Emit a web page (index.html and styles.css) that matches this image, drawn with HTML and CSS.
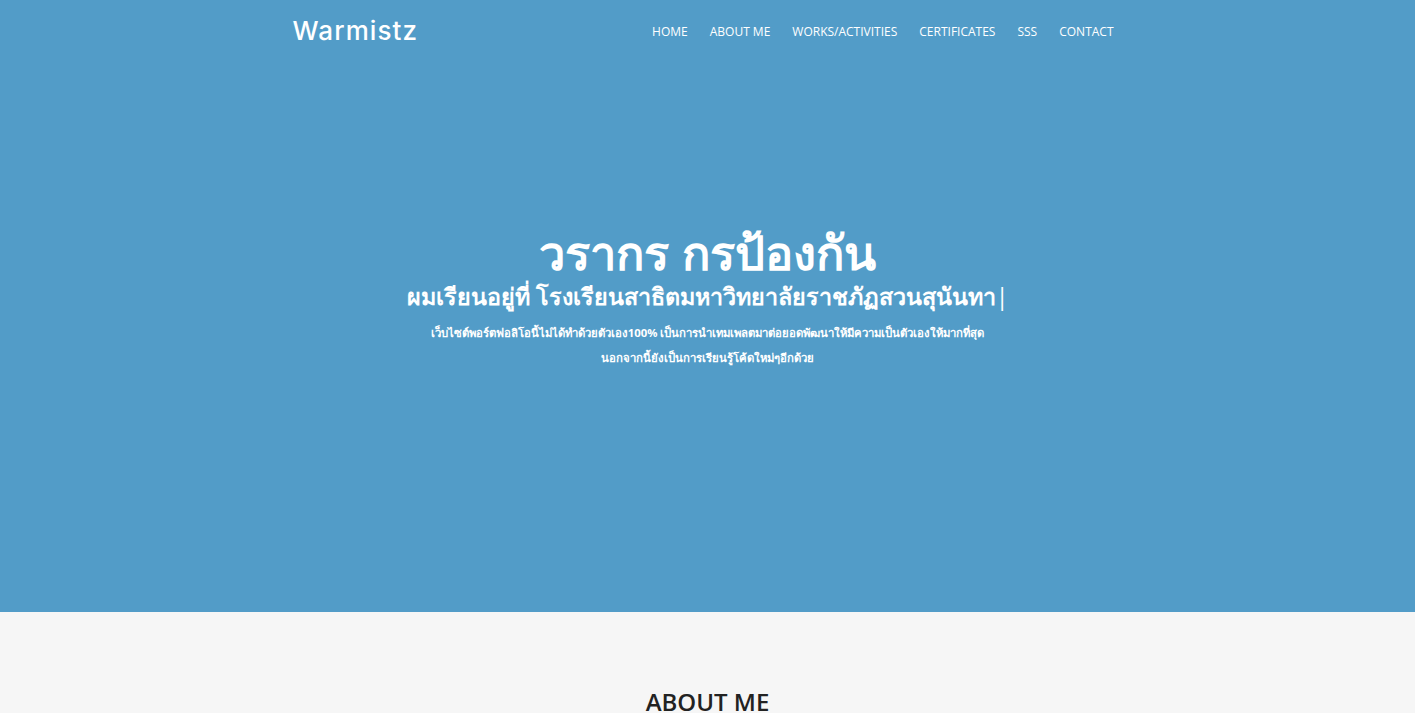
FILE: index.html
```html
<!DOCTYPE html>
<html lang="th">
<head>
<meta charset="utf-8">
<title>Warmistz</title>
<link rel="stylesheet" href="styles.css">
</head>
<body>
<header class="hero">
  <nav class="navbar">
    <div class="logo">Warmistz</div>
    <ul class="menu">
      <li><a href="#">HOME</a></li>
      <li><a href="#">ABOUT ME</a></li>
      <li><a href="#">WORKS/ACTIVITIES</a></li>
      <li><a href="#">CERTIFICATES</a></li>
      <li><a href="#">SSS</a></li>
      <li><a href="#">CONTACT</a></li>
    </ul>
  </nav>
  <div class="hero-content">
    <h1 class="hero-title">วรากร กรป้องกัน</h1>
    <h2 class="hero-sub">ผมเรียนอยู่ที่ <span class="typed">โรงเรียนสาธิตมหาวิทยาลัยราชภัฏสวนสุนันทา</span><span class="cursor">|</span></h2>
    <p class="hero-text">เว็บไซต์พอร์ตฟอลิโอนี้ไม่ได้ทำด้วยตัวเอง100% เป็นการนำเทมเพลตมาต่อยอดพัฒนาให้มีความเป็นตัวเองให้มากที่สุด<br>นอกจากนี้ยังเป็นการเรียนรู้โค้ดใหม่ๆอีกด้วย</p>
  </div>
</header>
<section class="about">
  <h2 class="section-title">ABOUT ME</h2>
</section>
</body>
</html>
```
FILE: styles.css
```css
* { box-sizing: border-box; }
html, body { margin: 0; padding: 0; }
body {
  font-family: "Open Sans", "Noto Sans", sans-serif;
  background: #f6f6f6;
  overflow: hidden;
}
.hero {
  background: #529cc8;
  height: 612px;
  display: flex;
  flex-direction: column;
  color: #fff;
}
.navbar {
  width: 834px;
  margin: 0 auto;
  padding-left: 2px;
  display: flex;
  justify-content: space-between;
  align-items: center;
  height: 62px;
}
.logo {
  font-family: "Inter", "Lato", sans-serif;
  font-size: 26px;
  font-weight: 500;
  letter-spacing: 1.1px;
  color: #fff;
  margin-top: -1px;
}
.menu {
  list-style: none;
  display: flex;
  margin: 0;
  padding: 0;
}
.menu a {
  display: block;
  padding: 0 11px;
  color: #fff;
  text-decoration: none;
  font-size: 12px;
  font-weight: 500;
}
.hero-content {
  flex: 1;
  display: flex;
  flex-direction: column;
  align-items: center;
  text-align: center;
  padding-top: 160px;
}
.hero-title {
  margin: 0;
  font-size: 47px;
  font-weight: 700;
  line-height: 60px;
}
.hero-sub {
  margin: -1px 0 0;
  font-size: 23.3px;
  font-weight: 700;
  line-height: 30px;
}
.hero-sub .cursor { font-weight: 400; }
.hero-text {
  margin: 9px 0 0;
  font-size: 11.35px;
  font-weight: 700;
  line-height: 25px;
}
.about {
  padding-top: 73px;
  text-align: center;
}
.section-title {
  margin: 0;
  font-size: 24px;
  font-weight: 600;
  color: #222;
}
```
